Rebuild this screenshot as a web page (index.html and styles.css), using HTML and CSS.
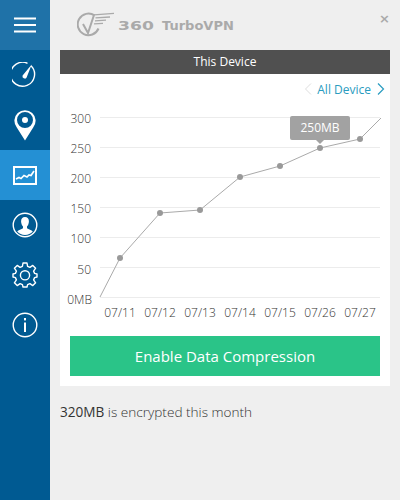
FILE: index.html
```html
<html>
<head>
    <meta charset="UTF-8">
    <title>360 TurboVPN</title>
    <link rel="stylesheet" href="styles.css">
</head>
<body>
    <nav class="sidebar">
        <div class="nav-item menu">
            <svg width="24" height="16" viewBox="0 0 24 16"><path d="M1 1.5H23M1 8H23M1 14.5H23" stroke="#fff" stroke-width="2" fill="none"/></svg>
        </div>
        <div class="nav-item">
            <svg width="26" height="26" viewBox="0 0 26 26"><path d="M19 3.7A12 12 0 1 1 15.5 1.3" stroke="#fff" stroke-width="1.4" fill="none"/><path d="M10.6 13.6L19.7 2.5 14.6 15.4A2.2 2.2 0 0 1 10.6 13.6Z" fill="#fff"/></svg>
        </div>
        <div class="nav-item">
            <svg width="22" height="32" viewBox="0 0 22 32"><path fill-rule="evenodd" d="M11 31.5L2.8 18.5A10.6 10.6 0 1 1 19.2 18.5ZM11 3A8 8 0 1 0 11 19 8 8 0 0 0 11 3Z" fill="#fff"/><circle cx="11" cy="11" r="3" fill="#fff"/></svg>
        </div>
        <div class="nav-item active">
            <svg width="24" height="19" viewBox="0 0 24 19"><rect x="1" y="1" width="22" height="17" fill="none" stroke="#fff" stroke-width="2"/><path d="M3 13L6 11.5 8 12.5 11 9.5 14 11 16 9 18 9.5 21 5" fill="none" stroke="#fff" stroke-width="1.7"/></svg>
        </div>
        <div class="nav-item">
            <svg width="26" height="26" viewBox="0 0 26 26"><circle cx="13" cy="13" r="11.8" fill="none" stroke="#fff" stroke-width="1.4"/><path d="M13 5C10 5 8.7 7.4 9.2 10.4 9.5 12.2 10.2 13.6 11 14.6V16.2C9.5 17.2 6.4 17.8 5.2 19.5A10.5 10.5 0 0 0 20.8 19.5C19.6 17.8 16.5 17.2 15 16.2V14.6C15.8 13.6 16.5 12.2 16.8 10.4 17.3 7.4 16 5 13 5Z" fill="#fff"/></svg>
        </div>
        <div class="nav-item">
            <svg width="26" height="26" viewBox="0 0 26 26"><path d="M11 1H15L15.6 4.4 17.9 5.4 20.8 3.4 23.6 6.2 21.6 9.1 22.6 11.4 25 12V15L22.6 15.6 21.6 17.9 23.6 20.8 20.8 23.6 17.9 21.6 15.6 22.6 15 25H11L10.4 22.6 8.1 21.6 5.2 23.6 2.4 20.8 4.4 17.9 3.4 15.6 1 15V12L3.4 11.4 4.4 9.1 2.4 6.2 5.2 3.4 8.1 5.4 10.4 4.4Z" fill="none" stroke="#fff" stroke-width="1.4" stroke-linejoin="round"/><circle cx="13" cy="13.3" r="4.6" fill="none" stroke="#fff" stroke-width="1.4"/></svg>
        </div>
        <div class="nav-item">
            <svg width="26" height="26" viewBox="0 0 26 26"><circle cx="13" cy="13" r="11.8" fill="none" stroke="#fff" stroke-width="1.4"/><rect x="12" y="6" width="2" height="2.4" fill="#fff"/><rect x="12" y="10.5" width="2" height="9.5" fill="#fff"/></svg>
        </div>
    </nav>

    <main class="content">
        <header class="topbar">
            <svg class="logo-mark" width="37" height="26" viewBox="0 0 37 26"><path d="M17.5 3.4A10.8 10.8 0 1 0 21.5 16.5" fill="none" stroke="#aaa" stroke-width="2"/><path d="M6 12L11 21 17 3" fill="none" stroke="#aaa" stroke-width="2"/><path d="M17 2.8L37 1.4M18.5 5.8L33 5M18 8.8L29 8.2M17 11.8L26 11.4" fill="none" stroke="#aaa" stroke-width="1.3"/></svg>
            <span class="logo-num">360</span>
            <span class="logo-name">TurboVPN</span>
            <span class="close">&#215;</span>
        </header>

        <section class="card">
            <div class="card-title">This Device</div>
            <div class="device-nav">
                <svg width="8" height="12" viewBox="0 0 8 12"><path d="M7 0.5L1.5 6 7 11.5" fill="none" stroke="#ddd" stroke-width="1"/></svg>
                <span class="device-name">All Device</span>
                <svg width="8" height="12" viewBox="0 0 8 12"><path d="M1 0.5L6.5 6 1 11.5" fill="none" stroke="#2a9cc0" stroke-width="1.2"/></svg>
            </div>
            <div class="chart">
                <svg class="plot" width="330" height="240" viewBox="60 90 330 240">
                    <g class="grid">
                        <path d="M100 117.5H380M100 147.5H380M100 177.5H380M100 207.5H380M100 237.5H380M100 267.5H380M100 297.5H380"/>
                    </g>
                    <g class="y-labels">
                        <text x="91" y="123">300</text>
                        <text x="91" y="153">250</text>
                        <text x="91" y="183">200</text>
                        <text x="91" y="213">150</text>
                        <text x="91" y="243">100</text>
                        <text x="91" y="274">50</text>
                        <text x="92" y="304">0MB</text>
                    </g>
                    <g class="x-labels">
                        <text x="120" y="317">07/11</text>
                        <text x="160" y="317">07/12</text>
                        <text x="200" y="317">07/13</text>
                        <text x="240" y="317">07/14</text>
                        <text x="280" y="317">07/15</text>
                        <text x="320" y="317">07/26</text>
                        <text x="360" y="317">07/27</text>
                    </g>
                    <polyline class="line" points="100,297 120,258 160,213 200,210 240,177 280,166 320,148 360,139 381,118"/>
                    <g class="dots">
                        <circle cx="120" cy="258" r="3"/>
                        <circle cx="160" cy="213" r="3"/>
                        <circle cx="200" cy="210" r="3"/>
                        <circle cx="240" cy="177" r="3"/>
                        <circle cx="280" cy="166" r="3"/>
                        <circle cx="320" cy="148" r="3"/>
                        <circle cx="360" cy="139" r="3"/>
                    </g>
                </svg>
                <div class="tooltip">250MB</div>
            </div>
            <button class="compress">Enable Data Compression</button>
        </section>

        <p class="usage"><b>320MB</b> is encrypted this month</p>
    </main>
</body>
</html>
```

FILE: styles.css
```css
html, body {
    height: 100%;
}

body {
    margin: 0;
    display: flex;
    background-color: #efefef;
    font-family: 'Open Sans', sans-serif;
    color: #555;
    overflow: hidden;
}

.sidebar {
    width: 50px;
    flex-shrink: 0;
    background-color: #005a92;
}

.nav-item {
    height: 50px;
    display: flex;
    align-items: center;
    justify-content: center;
}

.menu {
    background-color: #1f72a8;
}

.active {
    background-color: #2490d4;
}

.content {
    flex: 1;
    padding: 0 10px;
    min-width: 0;
}

.topbar {
    height: 50px;
    display: flex;
    align-items: center;
    padding-left: 17px;
    color: #aaa;
}

.logo-mark {
    margin-right: 4px;
}

.logo-num {
    display: inline-block;
    width: 39px;
    margin-right: 5px;
    font-family: 'DejaVu Sans', sans-serif;
    font-weight: bold;
    font-size: 13px;
    transform: scaleX(1.32);
    transform-origin: left;
}

.logo-name {
    font-family: 'DejaVu Sans', sans-serif;
    font-weight: bold;
    font-size: 13px;
}

.close {
    margin-left: auto;
    margin-top: -14px;
    font-family: 'DejaVu Sans', sans-serif;
    font-weight: bold;
    font-size: 13px;
}

.card {
    background: white;
    height: 336px;
}

.card-title {
    height: 24px;
    line-height: 24px;
    background-color: #505050;
    color: white;
    text-align: center;
    font-size: 12px;
}

.device-nav {
    height: 30px;
    display: flex;
    align-items: center;
    justify-content: flex-end;
    gap: 5px;
    padding-right: 5px;
    color: #2a9cc0;
    font-size: 12px;
}

.device-name {
    margin-right: 1px;
}

.chart {
    position: relative;
    height: 232px;
}

.plot {
    position: absolute;
    top: -14px;
    left: 0;
}

.grid path {
    stroke: #ececec;
    stroke-width: 1;
    fill: none;
}

.plot text {
    font-size: 12px;
    font-weight: 300;
    fill: #333;
}

.y-labels text {
    text-anchor: end;
}

.x-labels text {
    text-anchor: middle;
}

.line {
    fill: none;
    stroke: #aaa;
    stroke-width: 1;
}

.dots circle {
    fill: #999;
}

.tooltip {
    position: absolute;
    left: 230px;
    top: 12px;
    width: 60px;
    height: 24px;
    line-height: 24px;
    background-color: #a2a2a2;
    border-radius: 2px;
    color: white;
    font-size: 12px;
    text-align: center;
}

.tooltip::after {
    content: "";
    position: absolute;
    left: 26px;
    top: 24px;
    border: 4px solid transparent;
    border-top-color: #a2a2a2;
}

.compress {
    display: block;
    width: 310px;
    height: 40px;
    margin: 0 10px;
    background-color: #2ac488;
    color: white;
    border: none;
    font-family: 'Open Sans', sans-serif;
    font-size: 15px;
    cursor: pointer;
}

.usage {
    margin: 16px 0 0;
    font-size: 13.6px;
    font-weight: 300;
    color: #333;
}

.usage b {
    font-weight: 500;
}
```
